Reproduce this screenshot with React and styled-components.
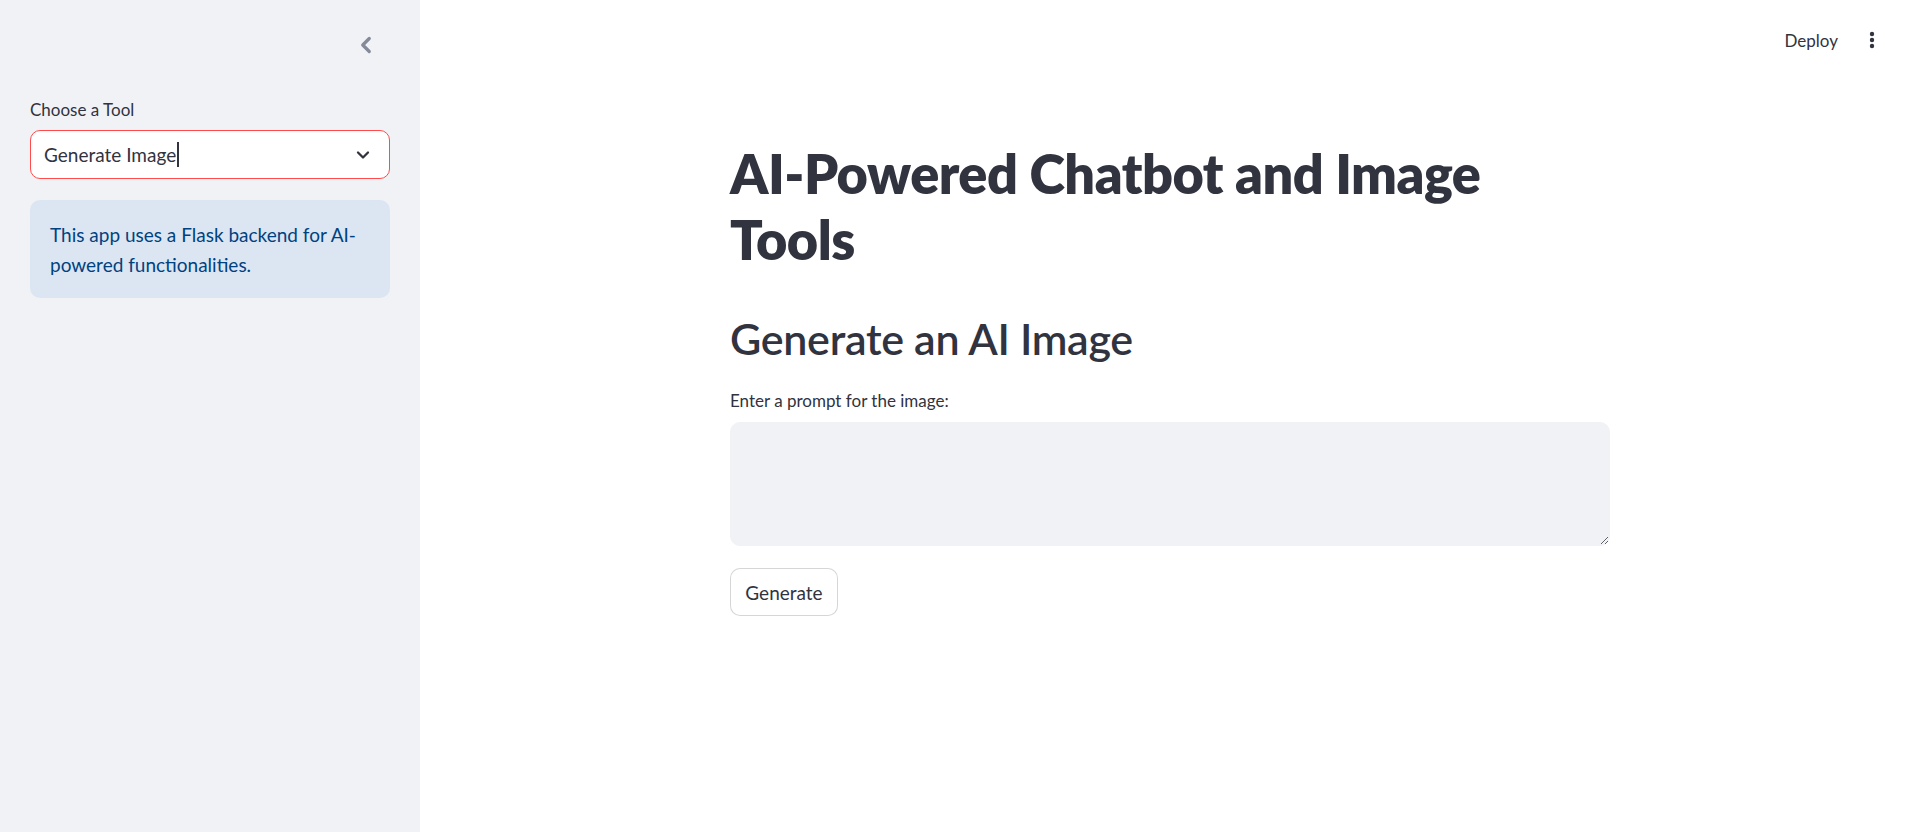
import React from 'react'
import styled, { createGlobalStyle } from 'styled-components'
import { ChevronLeft, ChevronDown } from 'lucide-react'

const GlobalStyle = createGlobalStyle`
    html, body {
        margin: 0;
        padding: 0;
        height: 100%;
    }
    body {
        font-family: Lato, "Open Sans", sans-serif;
        color: #31333f;
        background: #fff;
    }
    #root {
        height: 100%;
    }
`

const App = () => {
    return (
        <>
            <GlobalStyle />
            <Shell>
                <Sidebar>
                    <SidebarHeader>
                        <CollapseButton aria-label="Collapse sidebar">
                            <ChevronLeft size={26} strokeWidth={3} />
                        </CollapseButton>
                    </SidebarHeader>
                    <FieldLabel>Choose a Tool</FieldLabel>
                    <Select>
                        <SelectValue>
                            Generate Image<Caret />
                        </SelectValue>
                        <ChevronDown size={20} strokeWidth={2.75} color="#31333f" />
                    </Select>
                    <InfoBox>
                        This app uses a Flask backend for AI-powered functionalities.
                    </InfoBox>
                </Sidebar>

                <Main>
                    <Toolbar>
                        <DeployButton>Deploy</DeployButton>
                        <MenuButton aria-label="Main menu">
                            <svg width="6" height="18" viewBox="0 0 6 18">
                                <circle cx="3" cy="3" r="2.2" fill="#31333f" />
                                <circle cx="3" cy="9" r="2.2" fill="#31333f" />
                                <circle cx="3" cy="15" r="2.2" fill="#31333f" />
                            </svg>
                        </MenuButton>
                    </Toolbar>

                    <Content>
                        <Title>AI-Powered Chatbot and Image Tools</Title>
                        <Subtitle>Generate an AI Image</Subtitle>
                        <PromptLabel>Enter a prompt for the image:</PromptLabel>
                        <PromptInput aria-label="Enter a prompt for the image:" />
                        <GenerateButton>Generate</GenerateButton>
                    </Content>
                </Main>
            </Shell>
        </>
    )
}

export default App

const Shell = styled.div`
    display: flex;
    height: 100vh;
    overflow: hidden;
`

const Sidebar = styled.aside`
    width: 420px;
    flex-shrink: 0;
    box-sizing: border-box;
    background-color: #f0f2f6;
    padding: 25px 30px;
    display: flex;
    flex-direction: column;
`

const SidebarHeader = styled.div`
    height: 40px;
    display: flex;
    align-items: center;
    justify-content: flex-end;
    padding-right: 11px;
    margin-bottom: 31px;
`

const CollapseButton = styled.button`
    display: flex;
    align-items: center;
    justify-content: center;
    padding: 0;
    border: none;
    background: none;
    color: #858a9a;
    cursor: pointer;
`

const FieldLabel = styled.label`
    font-size: 17px;
    line-height: 28px;
    color: #31333f;
    margin-bottom: 6px;
`

const Select = styled.div`
    height: 49px;
    box-sizing: border-box;
    display: flex;
    align-items: center;
    justify-content: space-between;
    padding: 0 16px 0 13px;
    background: #fff;
    border: 1px solid #ff4b4b;
    border-radius: 10px;
`

const SelectValue = styled.span`
    display: flex;
    align-items: center;
    font-size: 19px;
    color: #31333f;
`

const Caret = styled.span`
    display: inline-block;
    width: 2px;
    height: 25px;
    background: #31333f;
    margin-left: 1px;
`

const InfoBox = styled.div`
    margin-top: 21px;
    padding: 20px 20px 18px;
    border-radius: 10px;
    background-color: #dce6f3;
    color: #004280;
    font-size: 19px;
    line-height: 30px;
`

const Main = styled.main`
    flex: 1;
    display: flex;
    flex-direction: column;
    background: #fff;
`

const Toolbar = styled.header`
    height: 80px;
    flex-shrink: 0;
    display: flex;
    align-items: center;
    justify-content: flex-end;
    padding-right: 34px;
    gap: 28px;
`

const DeployButton = styled.button`
    border: none;
    background: none;
    padding: 0;
    font-family: inherit;
    font-size: 17px;
    color: #31333f;
    cursor: pointer;
`

const MenuButton = styled.button`
    display: flex;
    align-items: center;
    border: none;
    background: none;
    padding: 0 3px;
    cursor: pointer;
`

const Content = styled.section`
    width: 880px;
    margin: 0 auto;
    padding: 61px 0 0 8px;
    display: flex;
    flex-direction: column;
    align-items: flex-start;
`

const Title = styled.h1`
    margin: 0;
    font-size: 54px;
    font-weight: 800;
    line-height: 66px;
    color: #31333f;
    letter-spacing: -0.5px;
`

const Subtitle = styled.h2`
    margin: 39px 0 0;
    font-size: 43px;
    font-weight: 600;
    line-height: 54px;
    color: #31333f;
    letter-spacing: -0.3px;
`

const PromptLabel = styled.label`
    margin-top: 21px;
    font-size: 17px;
    line-height: 28px;
    color: #31333f;
`

const PromptInput = styled.textarea`
    margin-top: 7px;
    width: 100%;
    height: 124px;
    box-sizing: border-box;
    border: 1px solid #f0f2f6;
    border-radius: 10px;
    background: #f0f2f6;
    padding: 14px 16px;
    font-family: inherit;
    font-size: 19px;
    color: #31333f;
    outline: none;
    resize: vertical;
`

const GenerateButton = styled.button`
    margin-top: 22px;
    height: 48px;
    width: 108px;
    box-sizing: border-box;
    border: 1px solid rgba(49, 51, 63, 0.2);
    border-radius: 10px;
    background: #fff;
    font-family: inherit;
    font-size: 19px;
    color: #31333f;
    cursor: pointer;
`
